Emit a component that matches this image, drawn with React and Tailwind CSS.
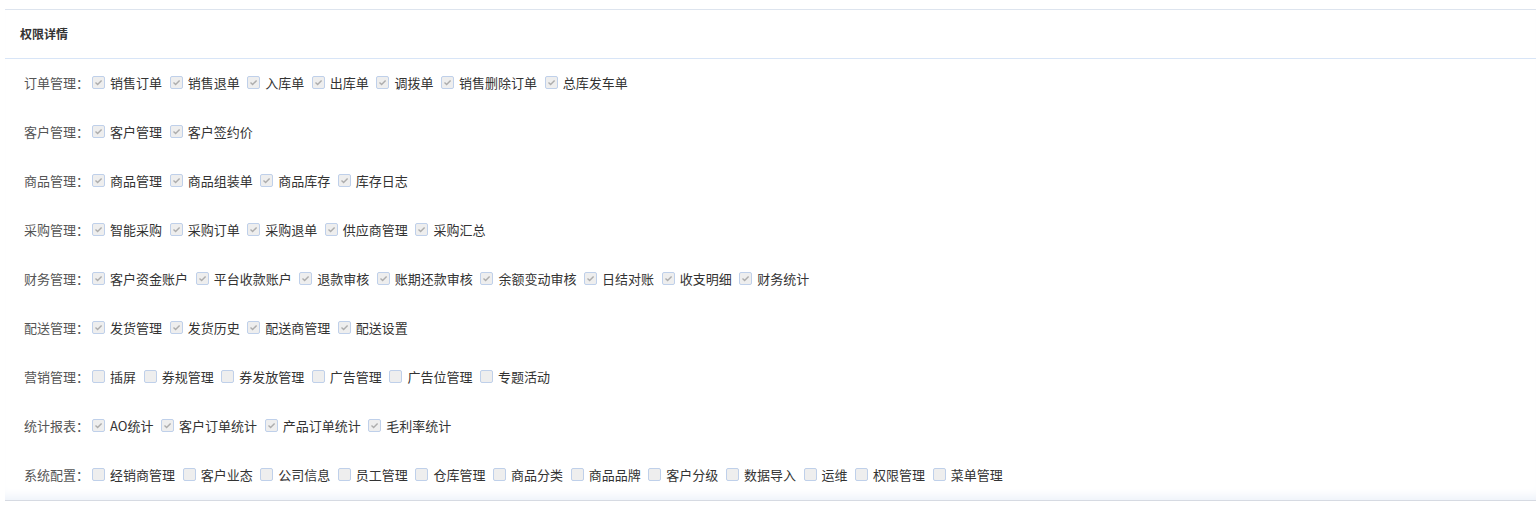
const groups = [
  { label: "订单管理：", items: ["销售订单", "销售退单", "入库单", "出库单", "调拨单", "销售删除订单", "总库发车单"], checked: true },
  { label: "客户管理：", items: ["客户管理", "客户签约价"], checked: true },
  { label: "商品管理：", items: ["商品管理", "商品组装单", "商品库存", "库存日志"], checked: true },
  { label: "采购管理：", items: ["智能采购", "采购订单", "采购退单", "供应商管理", "采购汇总"], checked: true },
  { label: "财务管理：", items: ["客户资金账户", "平台收款账户", "退款审核", "账期还款审核", "余额变动审核", "日结对账", "收支明细", "财务统计"], checked: true },
  { label: "配送管理：", items: ["发货管理", "发货历史", "配送商管理", "配送设置"], checked: true },
  { label: "营销管理：", items: ["插屏", "券规管理", "券发放管理", "广告管理", "广告位管理", "专题活动"], checked: false },
  { label: "统计报表：", items: ["AO统计", "客户订单统计", "产品订单统计", "毛利率统计"], checked: true },
  { label: "系统配置：", items: ["经销商管理", "客户业态", "公司信息", "员工管理", "仓库管理", "商品分类", "商品品牌", "客户分级", "数据导入", "运维", "权限管理", "菜单管理"], checked: false },
];

function Box({ checked }) {
  return (
    <span className="w-[13px] h-[13px] shrink-0 rounded-[2px] border border-[#bfd0ea] bg-[#eeeeee] flex items-center justify-center">
      {checked && (
        <svg width="9" height="9" viewBox="0 0 9 9">
          <polyline points="1.5,4.6 3.6,6.6 7.6,2.4" fill="none" stroke="#adadad" strokeWidth="1.4" />
        </svg>
      )}
    </span>
  );
}

export default function App() {
  return (
    <div className="bg-white min-h-[509px] pt-[9px] pl-[5px]" style={{ fontFamily: '"Noto Sans CJK SC", "Noto Sans", sans-serif' }}>
      <div className="border-t border-b border-t-[#dde4ee] border-b-[#d6dae2] shadow-[inset_0_-10px_10px_-6px_#edf2fa]">
        <div className="h-[49px] flex items-center pl-[15px] border-b border-[#d8e5f7]">
          <span className="text-[12px] font-bold text-[#333]">权限详情</span>
        </div>
        {groups.map((g) => (
          <div key={g.label} className="h-[49px] flex items-center pl-[19px] pb-[2px] text-[13px]">
            <span className="text-[#555] mr-[3px] whitespace-nowrap">{g.label}</span>
            {g.items.map((it) => (
              <label key={it} className="flex items-center mr-[7.6px]">
                <Box checked={g.checked} />
                <span className="ml-[5px] text-[#333] whitespace-nowrap">{it}</span>
              </label>
            ))}
          </div>
        ))}
      </div>
    </div>
  );
}
